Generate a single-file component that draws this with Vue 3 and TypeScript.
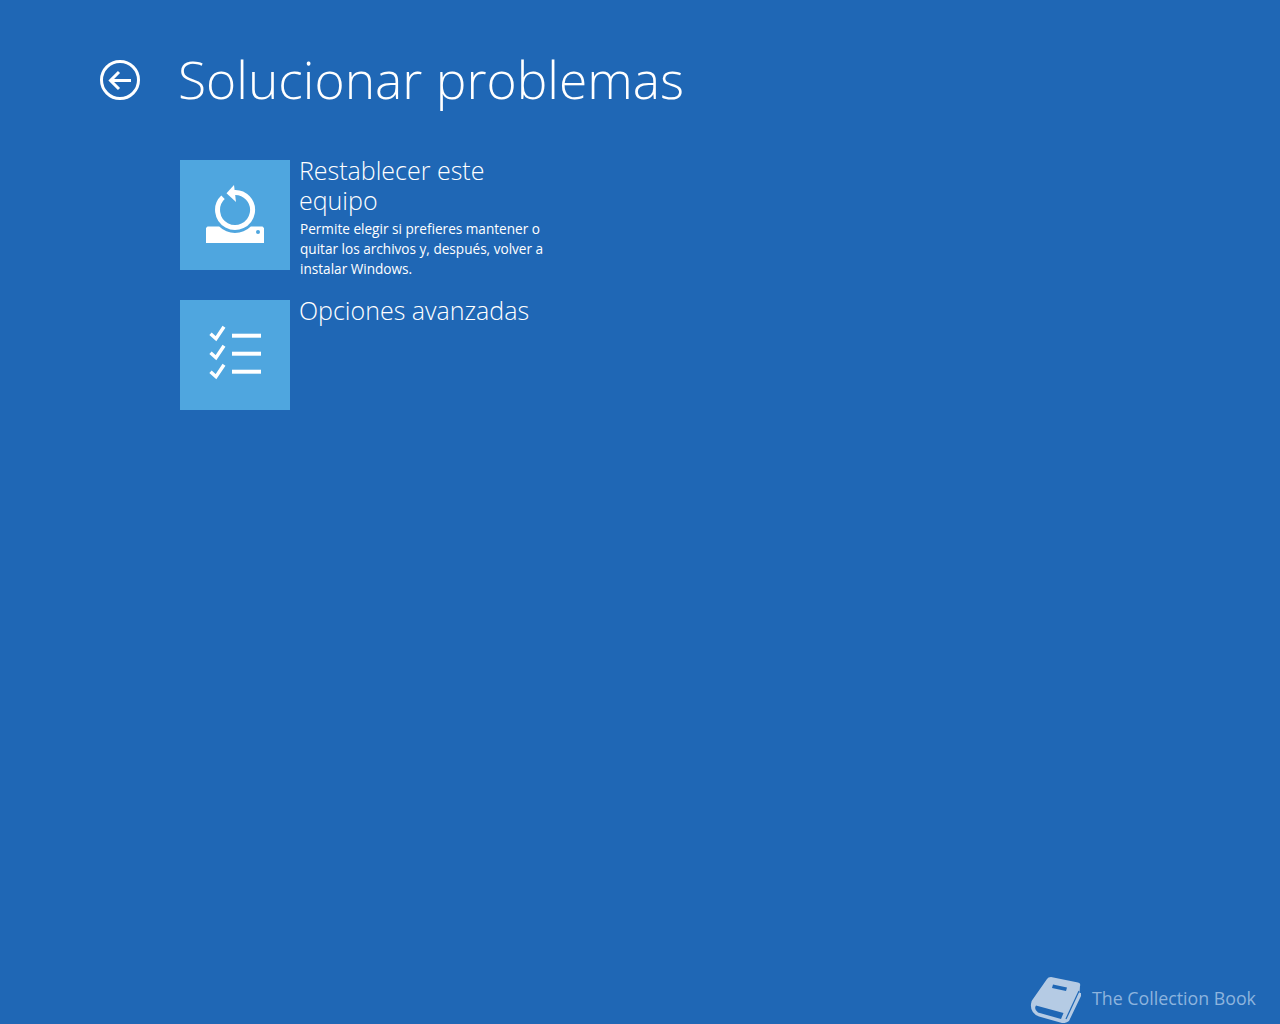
<script setup lang="ts">
const options = [
  {
    id: 'reset',
    title: 'Restablecer este equipo',
    description: 'Permite elegir si prefieres mantener o quitar los archivos y, después, volver a instalar Windows.'
  },
  { id: 'advanced', title: 'Opciones avanzadas', description: '' }
]
const rows = [0, 1, 2]
</script>

<template>
  <div class="screen">
    <header class="head">
      <button type="button" class="back" aria-label="Volver">
        <svg width="40" height="40" viewBox="0 0 40 40" fill="none" stroke="#fff">
          <circle cx="20" cy="20" r="18.5" stroke-width="3" />
          <path d="M31 20.500H11M19 12l-8.500 8.500L19 29" stroke-width="3" />
        </svg>
      </button>
      <h1 class="title">Solucionar problemas</h1>
    </header>

    <ul class="options">
      <li v-for="o in options" :key="o.id" class="option">
        <div class="tile">
          <svg v-if="o.id === 'reset'" width="110" height="110" viewBox="0 0 110 110">
            <path d="M27.500 66.500H39.200A22.500 22.500 0 0 0 70.800 66.500H82.500L84 68V83H26V68Z" fill="#fff" />
            <circle cx="78" cy="72" r="2" fill="#4fa6df" />
            <path d="M43 37.300A17.500 17.500 0 1 0 53 32.600" fill="none" stroke="#fff" stroke-width="5" />
            <path d="M46.500 33.300 54 25 56 42Z" fill="#fff" />
          </svg>
          <svg v-else width="110" height="110" viewBox="0 0 110 110" fill="none" stroke="#fff">
            <g v-for="i in rows" :key="i">
              <path :transform="`translate(0 ${i * 19 - 2.3})`" d="M30.500 36l5.500 5 8-12" stroke-width="3.500" />
              <path :transform="`translate(0 ${i * 18 - 2.3})`" d="M52 38h29" stroke-width="4" />
            </g>
          </svg>
        </div>
        <div class="text">
          <h2 class="name">{{ o.title }}</h2>
          <p v-if="o.description" class="desc">{{ o.description }}</p>
        </div>
      </li>
    </ul>

    <footer class="brand">
      <svg width="52" height="50" viewBox="0 0 52 50">
        <path d="M21 4 48 9.500Q51 10 50 13L49.500 20 51 20V23L39 48Q36 50.500 32 50L9 43.500Q0 40 1 31Q1 28 3 26L17 6Q18 4 21 4Z" fill="#b5cbe4" />
        <path d="M49 18 36 46" fill="none" stroke="#1f67b5" stroke-width="1.200" />
        <path d="M6 32.500 33.500 40 31 46 8 39.500Q3.500 36 6 32.500Z" fill="#1f67b5" />
        <path d="M23 11.500 37 14.500 36 18 22 15Z" fill="#1f67b5" />
      </svg>
      <span class="brand-name">The Collection Book</span>
    </footer>
  </div>
</template>

<style scoped>
.screen {
  position: relative;
  width: 1280px;
  height: 1024px;
  overflow: hidden;
  background: #1f67b5;
  color: #fff;
  font-family: "Open Sans", "Noto Sans", sans-serif;
}
.head {
  display: flex;
  align-items: center;
  gap: 38px;
  padding: 48px 0 0 100px;
  height: 64px;
}
.back {
  display: block;
  width: 40px;
  height: 40px;
  padding: 0;
  border: 0;
  background: none;
}
.back svg { display: block; }
.title {
  margin: -2px 0 0;
  font-size: 51.500px;
  line-height: 64px;
  font-weight: 300;
  white-space: nowrap;
}
.options {
  list-style: none;
  margin: 48px 0 0 180px;
  padding: 0;
  display: flex;
  flex-direction: column;
  gap: 30px;
}
.option {
  display: flex;
  height: 110px;
}
.tile {
  width: 110px;
  height: 110px;
  flex: none;
  background: #4fa6df;
}
.tile svg { display: block; }
.text {
  width: 250px;
  margin-left: 9px;
  margin-top: -5px;
}
.name {
  margin: 0;
  font-size: 25px;
  line-height: 30px;
  font-weight: 300;
}
.desc {
  margin: 4px 0 0 1px;
  font-size: 13.600px;
  line-height: 20px;
  font-weight: 400;
}
.brand {
  position: absolute;
  left: 1030px;
  bottom: 1px;
  display: flex;
  align-items: center;
  gap: 10px;
}
.brand svg { display: block; }
.brand-name {
  font-size: 17.800px;
  color: #8db4de;
}
</style>
